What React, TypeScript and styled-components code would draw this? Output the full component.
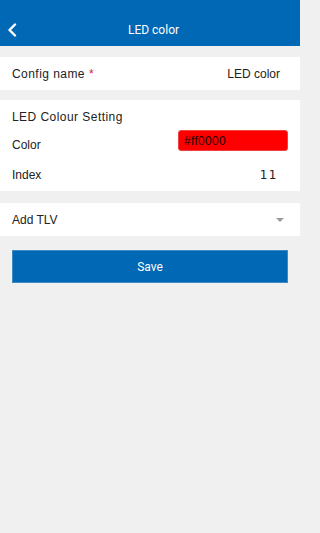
import React from "react";
import styled, { createGlobalStyle } from "styled-components";

const Global = createGlobalStyle`
  html, body { margin: 0; padding: 0; background: #f0f0f0; }
  body { font-family: "Liberation Sans", Arial, sans-serif; color: #222; }
  * { box-sizing: border-box; }
`;

const Page = styled.div`
  width: 300px;
  min-height: 533px;
  background: #f0f0f0;
  display: flex;
  flex-direction: column;
`;

const Header = styled.header`
  height: 46px;
  background: #0068b5;
  display: flex;
  align-items: center;
  padding-top: 14px;
  position: relative;
`;

const BackButton = styled.button`
  position: absolute;
  left: 4px;
  top: 22px;
  width: 16px;
  height: 16px;
  padding: 0;
  border: 0;
  background: none;
  display: flex;
  align-items: center;
  justify-content: center;
`;

const Title = styled.h1`
  flex: 1;
  margin: 0;
  text-align: center;
  color: #fff;
  font-family: Roboto, "Liberation Sans", sans-serif;
  font-weight: 400;
  font-size: 12px;
  padding-left: 7px;
`;

const Section = styled.section<{ $mt: number }>`
  margin-top: ${(p) => p.$mt}px;
  background: #fff;
  display: flex;
  flex-direction: column;
`;

const Row = styled.div<{ $h: number; $pt?: number }>`
  height: ${(p) => p.$h}px;
  padding: ${(p) => p.$pt ?? 0}px 12px 0;
  display: flex;
  align-items: center;
  justify-content: space-between;
`;

const Label = styled.span<{ $wide?: boolean }>`
  font-size: 12px;
  letter-spacing: ${(p) => (p.$wide ? "0.45px" : "0")};
  color: #222;
`;

const Required = styled.span`
  color: #d21a4a;
  margin-left: 4px;
`;

const Value = styled.span<{ $mono?: boolean }>`
  font-size: 12px;
  color: #222;
  letter-spacing: ${(p) => (p.$mono ? "1.5px" : "0")};
  padding-right: ${(p) => (p.$mono ? "10px" : "8px")};
  font-family: ${(p) => (p.$mono ? '"DejaVu Sans", sans-serif' : "inherit")};
`;

const SectionTitle = styled.span`
  font-size: 12px;
  letter-spacing: 0.45px;
  color: #222;
`;

const ColorInput = styled.div`
  align-self: flex-start;
  width: 110px;
  height: 21px;
  border-radius: 3px;
  background: #ff0000;
  border: 1px solid #f04040;
  display: flex;
  align-items: center;
  padding-left: 5px;
  font-size: 12px;
  color: #1a0000;
  letter-spacing: 0.3px;
`;

const Caret = styled.span`
  width: 0;
  height: 0;
  border-left: 4px solid transparent;
  border-right: 4px solid transparent;
  border-top: 4px solid #9a9a9a;
  margin-right: 4px;
`;

const SaveButton = styled.button`
  margin: 14px 12px 0;
  height: 33px;
  background: #0068b5;
  border: 1px solid #3d8cc8;
  color: #fff;
  font-family: Roboto, "Liberation Sans", sans-serif;
  font-size: 12px;
  padding: 0;
`;

export default function App() {
  return (
    <Page>
      <Global />
      <Header>
        <BackButton aria-label="back">
          <svg width="10" height="14" viewBox="0 0 10 14">
            <path d="M8 1.5 L2.5 7 L8 12.5" stroke="#fff" strokeWidth="2.4" fill="none" strokeLinecap="round" strokeLinejoin="round" />
          </svg>
        </BackButton>
        <Title>LED color</Title>
      </Header>

      <Section $mt={11}>
        <Row $h={33}>
          <Label $wide>
            Config name<Required>*</Required>
          </Label>
          <Value>LED color</Value>
        </Row>
      </Section>

      <Section $mt={10}>
        <Row $h={30} $pt={4}>
          <SectionTitle>LED Colour Setting</SectionTitle>
        </Row>
        <Row $h={29}>
          <Label>Color</Label>
          <ColorInput>#ff0000</ColorInput>
        </Row>
        <Row $h={32}>
          <Label>Index</Label>
          <Value $mono>11</Value>
        </Row>
      </Section>

      <Section $mt={12}>
        <Row $h={33}>
          <Label>Add TLV</Label>
          <Caret />
        </Row>
      </Section>

      <SaveButton>Save</SaveButton>
    </Page>
  );
}
